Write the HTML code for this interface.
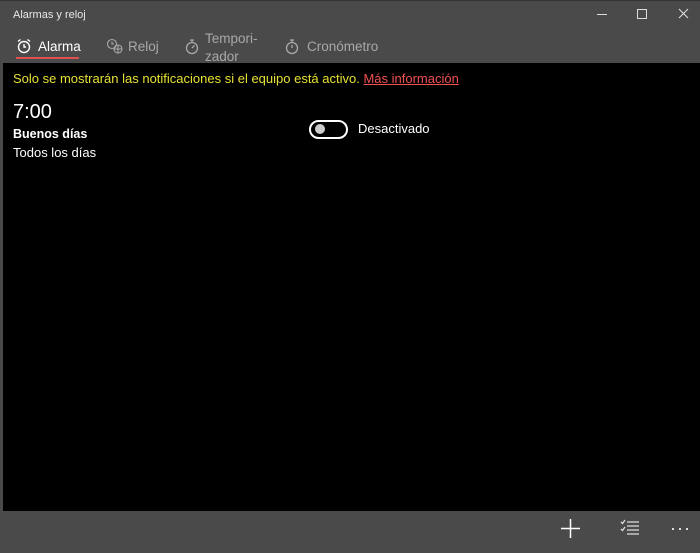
<!DOCTYPE html><html><head><meta charset="utf-8"><style>
body{margin:0;width:700px;height:553px;background:#4a4a4a;font-family:"Liberation Sans",sans-serif;position:relative;overflow:hidden;color:#fff}
.a{position:absolute}
.tab{position:absolute;font-size:13.5px;color:#a8a8a8;top:39px}
svg{position:absolute}
</style></head><body>
<div class="a" style="left:0;top:0;width:700px;height:1px;background:#333"></div>
<div class="a" style="left:13px;top:9px;font-size:11px;color:#e8e8e8">Alarmas y reloj</div>
<div class="a" style="left:597px;top:14px;width:10px;height:1px;background:#ddd"></div>
<div class="a" style="left:637px;top:9px;width:8px;height:8px;border:1px solid #ddd"></div>
<svg style="left:678px;top:8px" width="11" height="11"><path d="M1 1L10 10M10 1L1 10" stroke="#ddd" stroke-width="1.1"/></svg>

<svg style="left:16px;top:38px" width="16" height="16" fill="none" stroke="#fff" stroke-width="1.4"><circle cx="8" cy="9" r="5.5"/><path d="M8 6v3h2M2 3.5l2.5-2M14 3.5l-2.5-2"/></svg>
<div class="tab" style="left:38px;color:#fff">Alarma</div>
<div class="a" style="left:16px;top:57px;width:63px;height:2px;background:#e05050"></div>
<svg style="left:106px;top:38px" width="17" height="16" fill="none" stroke="#a8a8a8" stroke-width="1.1"><circle cx="6" cy="6" r="4.5"/><path d="M6 3.5V6h2"/><circle cx="12" cy="11" r="4"/><path d="M8 11h8M12 7v8"/></svg>
<div class="tab" style="left:128px">Reloj</div>
<svg style="left:184px;top:38px" width="16" height="17" fill="none" stroke="#a8a8a8" stroke-width="1.3"><circle cx="8" cy="10" r="5.5"/><path d="M6 2h4M8 2v2.5M8 10l2.5-2.5"/></svg>
<div class="tab" style="left:205px;top:30px;line-height:18px;width:60px">Tempori-<br>zador</div>
<svg style="left:284px;top:38px" width="16" height="17" fill="none" stroke="#a8a8a8" stroke-width="1.3"><circle cx="8" cy="10" r="5.5"/><path d="M6 2h4M8 2v2.5M8 7v3"/></svg>
<div class="tab" style="left:307px">Cronómetro</div>

<div class="a" style="left:3px;top:63px;width:697px;height:448px;background:#000"></div>
<div class="a" style="left:13px;top:71px;font-size:13px;color:#e6e033">Solo se mostrarán las notificaciones si el equipo está activo. <span style="color:#f05050;text-decoration:underline">Más información</span></div>
<div class="a" style="left:13px;top:101px;font-size:20px;color:#fff">7:00</div>
<div class="a" style="left:13px;top:127px;font-size:12.5px;font-weight:bold">Buenos días</div>
<div class="a" style="left:13px;top:145px;font-size:13px">Todos los días</div>
<div class="a" style="left:309px;top:120px;width:35px;height:15px;border:2px solid #fff;border-radius:10px"></div>
<div class="a" style="left:315px;top:124px;width:10px;height:10px;border-radius:50%;background:#ccc"></div>
<div class="a" style="left:358px;top:121px;font-size:13px">Desactivado</div>

<svg style="left:561px;top:519px" width="19" height="19"><path d="M9.5 0v19M0 9.5h19" stroke="#fff" stroke-width="1.5"/></svg>
<svg style="left:620px;top:519px" width="20" height="17" fill="none" stroke="#ddd" stroke-width="1.3"><path d="M1 3l1.5 1.5L5 1M1 10l1.5 1.5L5 8M7 3h12M7 7h12M7 11h12M7 15h12"/></svg>
<svg style="left:672px;top:527px" width="20" height="4" fill="#ddd"><rect x="0" y="1" width="2" height="2"/><rect x="7" y="1" width="2" height="2"/><rect x="14" y="1" width="2" height="2"/></svg>
</body></html>
